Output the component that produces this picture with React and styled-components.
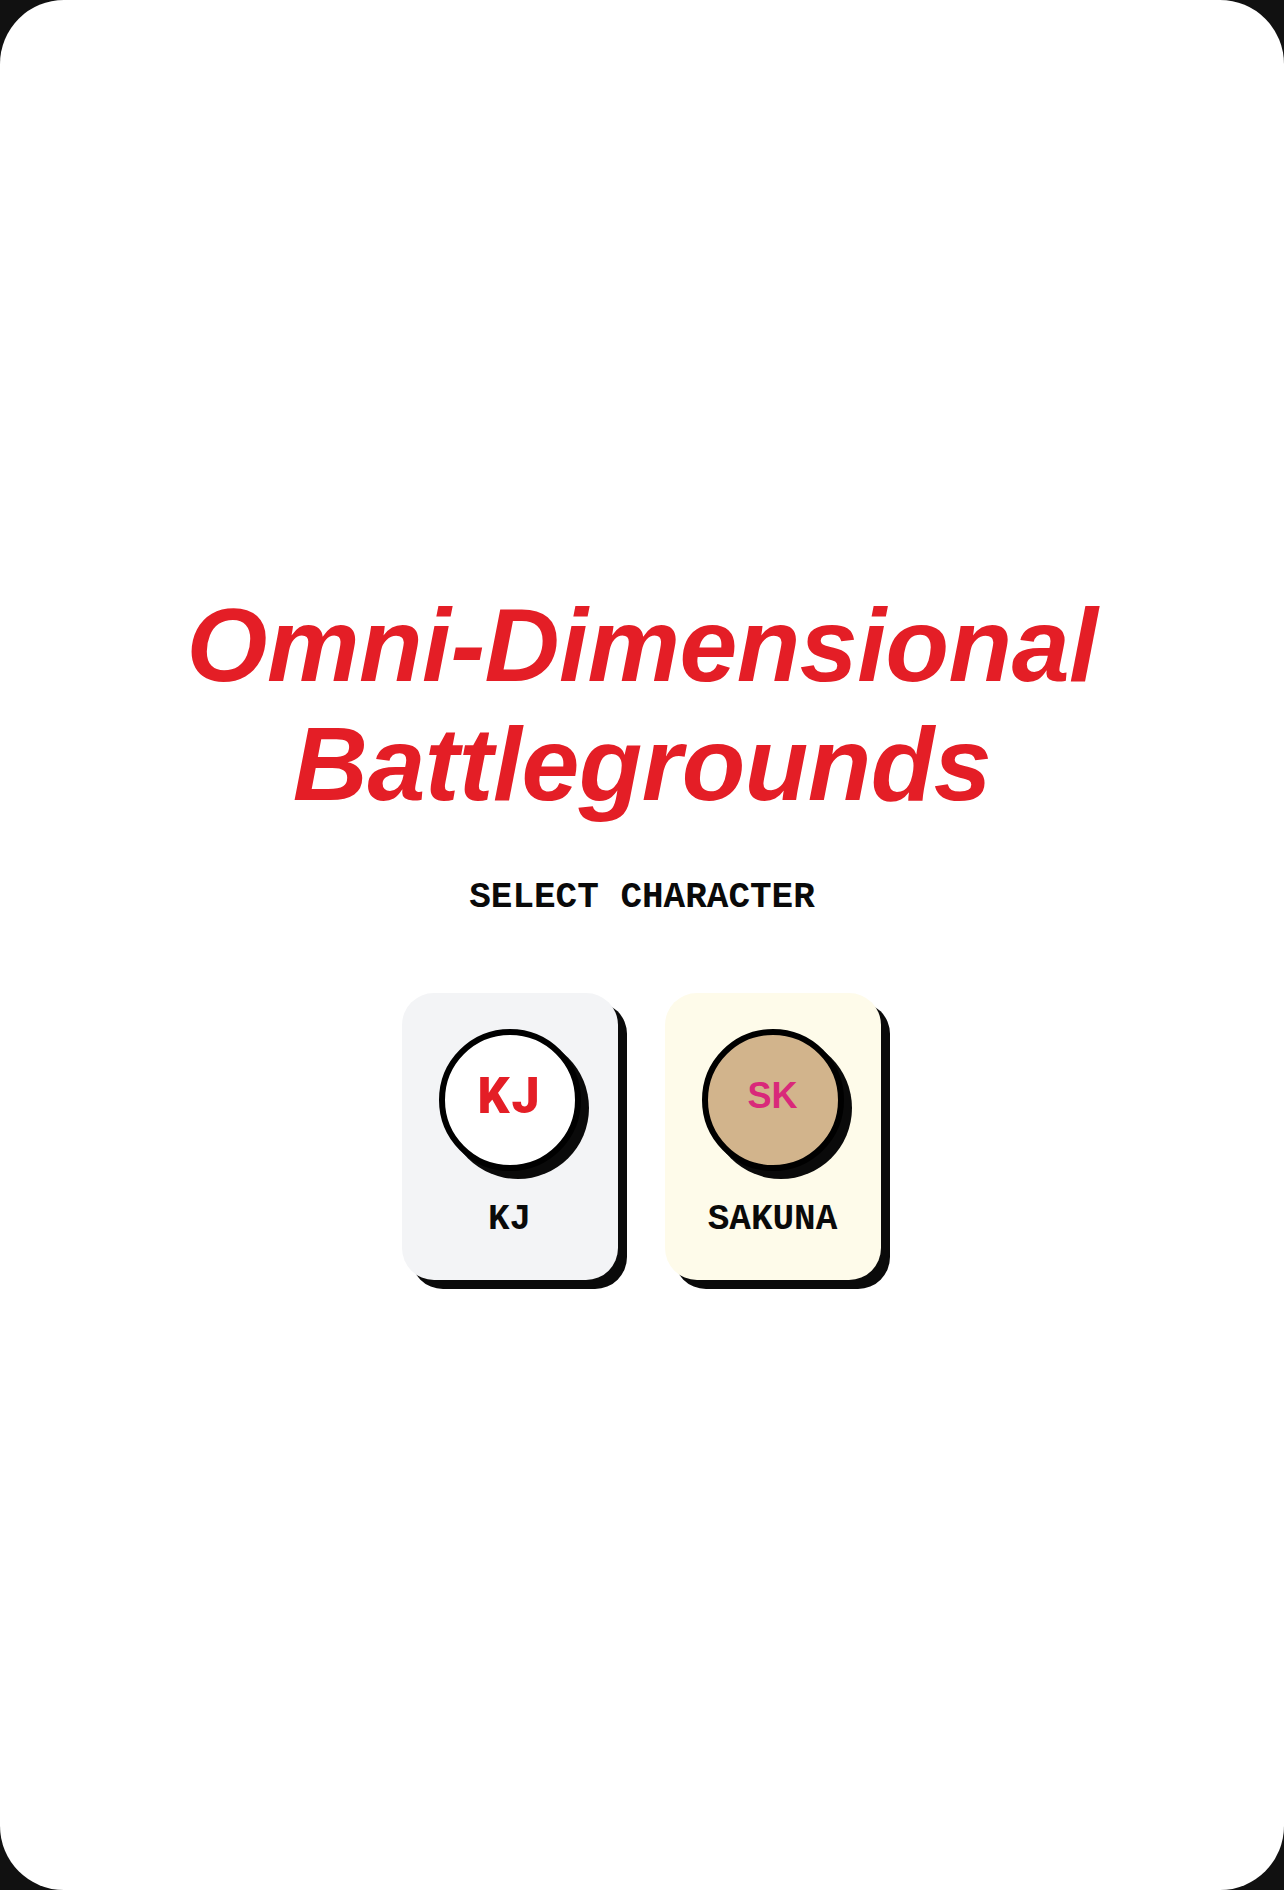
import React from "react";
import styled, { createGlobalStyle } from "styled-components";

const GlobalStyle = createGlobalStyle`
  html, body {
    margin: 0;
    padding: 0;
    background: #111111;
  }
  #root {
    min-height: 100vh;
  }
`;

const Screen = styled.main`
  box-sizing: border-box;
  min-height: 1890px;
  background: #ffffff;
  border-radius: 64px;
  display: flex;
  flex-direction: column;
  align-items: center;
  justify-content: center;
  padding-bottom: 25px;
`;

const Title = styled.h1`
  margin: 0;
  font-family: "Liberation Sans", Arial, sans-serif;
  font-size: 104px;
  font-weight: 700;
  font-style: italic;
  letter-spacing: -0.5px;
  line-height: normal;
  color: #e41e26;
  text-align: center;
`;

const Subtitle = styled.h2`
  margin: 53px 0 0;
  font-family: "Liberation Mono", "Courier New", monospace;
  font-size: 36px;
  font-weight: 700;
  line-height: normal;
  color: #0a0a0a;
`;

const CardRow = styled.div`
  margin-top: 75px;
  display: flex;
  gap: 47px;
  padding-right: 2px;
`;

const Card = styled.button`
  box-sizing: border-box;
  width: 216px;
  height: 287px;
  padding: 36px 0 0;
  border: none;
  border-radius: 32px;
  background: ${props => props.bg};
  box-shadow: 9px 9px 0 #0a0a0a;
  display: flex;
  flex-direction: column;
  align-items: center;
  gap: 28px;
  cursor: pointer;
`;

const Avatar = styled.div`
  box-sizing: border-box;
  width: 142px;
  height: 142px;
  flex-shrink: 0;
  border-radius: 50%;
  border: 6px solid #000000;
  background: ${props => props.bg};
  box-shadow: 8px 8px 0 #0a0a0a;
  display: flex;
  align-items: center;
  justify-content: center;
  padding-bottom: 8px;
`;

const Initials = styled.span`
  font-family: ${props =>
    props.variant === "sans"
      ? '"Liberation Sans", Arial, sans-serif'
      : 'Roboto, "Noto Sans", sans-serif'};
  font-size: ${props => (props.variant === "sans" ? "36px" : "50px")};
  font-weight: ${props => (props.variant === "sans" ? 700 : 900)};
  letter-spacing: ${props => (props.variant === "sans" ? "0" : "0.04em")};
  color: ${props => props.color};
  line-height: 1;
`;

const Name = styled.span`
  font-family: "Liberation Mono", "Courier New", monospace;
  font-size: 36px;
  font-weight: 700;
  line-height: normal;
  color: #0a0a0a;
`;

const characters = [
  {
    id: "kj",
    name: "KJ",
    initials: "KJ",
    card: "#f3f4f6",
    avatar: "#ffffff",
    color: "#e41e26",
    variant: "roboto"
  },
  {
    id: "sakuna",
    name: "SAKUNA",
    initials: "SK",
    card: "#fefbea",
    avatar: "#d2b48c",
    color: "#d9297a",
    variant: "sans"
  }
];

export default function App() {
  return (
    <>
      <GlobalStyle />
      <Screen>
        <Title>
          Omni-Dimensional
          <br />
          Battlegrounds
        </Title>
        <Subtitle>SELECT CHARACTER</Subtitle>
        <CardRow>
          {characters.map(c => (
            <Card key={c.id} bg={c.card}>
              <Avatar bg={c.avatar}>
                <Initials color={c.color} variant={c.variant}>
                  {c.initials}
                </Initials>
              </Avatar>
              <Name>{c.name}</Name>
            </Card>
          ))}
        </CardRow>
      </Screen>
    </>
  );
}
